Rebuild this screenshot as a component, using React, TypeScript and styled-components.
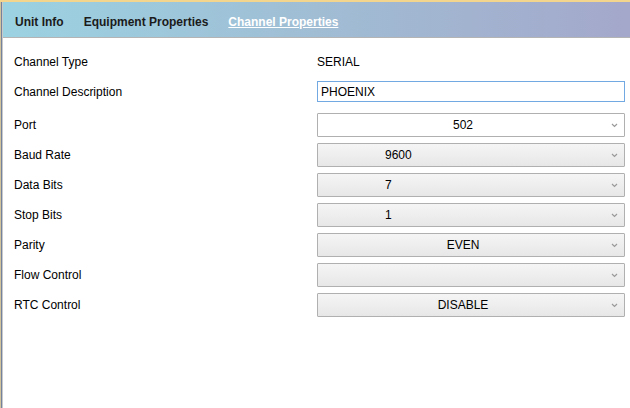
import styled, { createGlobalStyle } from "styled-components";

const GlobalStyle = createGlobalStyle`
  html, body {
    margin: 0;
    padding: 0;
    background: #ffffff;
  }
  body {
    font-family: "Liberation Sans", Arial, sans-serif;
    color: #000000;
  }
`;

const Frame = styled.div`
  height: 100vh;
  box-sizing: border-box;
  border-top: 2px solid #f3d58e;
  padding-left: 3px;
  box-shadow: inset 1px 0 #d2c49c, inset 2px 0 #75829e, inset 3px 0 #c9c9c9;
`;

const TabBar = styled.div`
  display: flex;
  align-items: center;
  gap: 20px;
  height: 36px;
  padding: 4px 0 0 12px;
  box-sizing: border-box;
  background: linear-gradient(90deg, #9bd2e2 0%, #a0bdd4 50%, #a4a8cb 100%);
  border-bottom: 1px solid #b4b4b4;
`;

const Tab = styled.span<{ $active?: boolean }>`
  font-size: 12px;
  font-weight: bold;
  color: ${(p) => (p.$active ? "#ffffff" : "#1b1b1b")};
  text-decoration: ${(p) => (p.$active ? "underline" : "none")};
  cursor: pointer;
`;

const Form = styled.div`
  display: grid;
  grid-template-columns: 303px 308px;
  padding: 9px 0 0 11px;
`;

const Row = styled.div`
  display: contents;
`;

const Label = styled.div<{ $gapTop?: number }>`
  height: 30px;
  display: flex;
  align-items: center;
  font-size: 12px;
  margin-top: ${(p) => p.$gapTop ?? 0}px;
`;

const Value = styled.div<{ $gapTop?: number }>`
  height: 30px;
  display: flex;
  align-items: center;
  font-size: 12px;
  margin-top: ${(p) => p.$gapTop ?? 0}px;
`;

const TextInput = styled.input`
  width: 308px;
  height: 21px;
  box-sizing: border-box;
  border: 1px solid #72a9e3;
  padding: 0 3px;
  font-family: "Liberation Sans", Arial, sans-serif;
  font-size: 12px;
  color: #000;
  outline: none;
  margin-top: -1px;
`;

const SelectWrap = styled.div`
  position: relative;
  width: 308px;
  height: 24px;
`;

const SelectBox = styled.select<{ $plain?: boolean; $left?: boolean }>`
  appearance: none;
  width: 100%;
  height: 100%;
  box-sizing: border-box;
  border: 1px solid #b0b0b0;
  border-radius: 1px;
  background: ${(p) =>
    p.$plain ? "#ffffff" : "linear-gradient(#f5f5f5, #e7e7e7)"};
  font-family: "Liberation Sans", Arial, sans-serif;
  font-size: 12px;
  color: #000;
  text-align: ${(p) => (p.$left ? "left" : "center")};
  text-align-last: ${(p) => (p.$left ? "left" : "center")};
  padding: 0 20px 0 ${(p) => (p.$left ? 67 : 4)}px;
  outline: none;
`;

const Chevron = styled.svg`
  position: absolute;
  right: 7px;
  top: 10px;
  width: 7px;
  height: 5px;
  pointer-events: none;
`;

type SelectProps = {
  value: string;
  plain?: boolean;
  left?: boolean;
};

function Select({ value, plain, left }: SelectProps) {
  return (
    <SelectWrap>
      <SelectBox $plain={plain} $left={left} value={value} onChange={() => {}}>
        <option value={value}>{value}</option>
      </SelectBox>
      <Chevron viewBox="0 0 7 5">
        <path d="M1 1 L3.5 3.5 L6 1" fill="none" stroke="#9a9a9a" strokeWidth="1.2" />
      </Chevron>
    </SelectWrap>
  );
}

const selects = [
  { label: "Port", value: "502", plain: true, gap: 3 },
  { label: "Baud Rate", value: "9600", left: true },
  { label: "Data Bits", value: "7", left: true },
  { label: "Stop Bits", value: "1", left: true },
  { label: "Parity", value: "EVEN" },
  { label: "Flow Control", value: "" },
  { label: "RTC Control", value: "DISABLE" },
];

export default function App() {
  return (
    <>
      <GlobalStyle />
      <Frame>
        <TabBar>
          <Tab>Unit Info</Tab>
          <Tab>Equipment Properties</Tab>
          <Tab $active>Channel Properties</Tab>
        </TabBar>
        <Form>
          <Row>
            <Label>Channel Type</Label>
            <Value>SERIAL</Value>
          </Row>
          <Row>
            <Label>Channel Description</Label>
            <Value>
              <TextInput defaultValue="PHOENIX" />
            </Value>
          </Row>
          {selects.map((s) => (
            <Row key={s.label}>
              <Label $gapTop={s.gap}>{s.label}</Label>
              <Value $gapTop={s.gap}>
                <Select value={s.value} plain={s.plain} left={s.left} />
              </Value>
            </Row>
          ))}
        </Form>
      </Frame>
    </>
  );
}
